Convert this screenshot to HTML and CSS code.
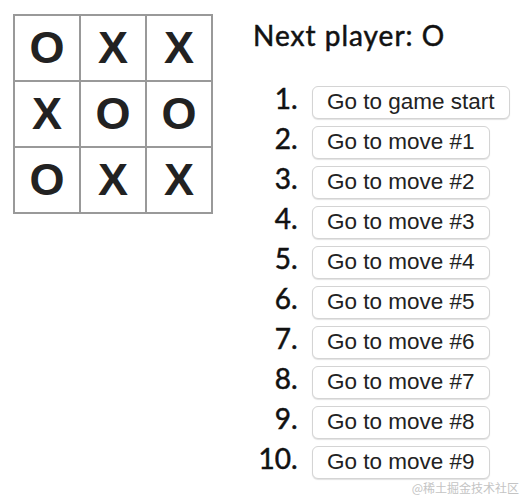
FILE: index.html
```html
<!DOCTYPE html>
<html lang="en">
<head>
    <meta charset="UTF-8">
    <meta name="viewport" content="width=device-width, initial-scale=1.0">
    <title>Tic Tac Toe</title>
    <link rel="stylesheet" href="styles.css">
</head>
<body>
    <main class="game">
        <div class="game-board">
            <div class="board-row">
                <button class="square">O</button>
                <button class="square">X</button>
                <button class="square">X</button>
            </div>
            <div class="board-row">
                <button class="square">X</button>
                <button class="square">O</button>
                <button class="square">O</button>
            </div>
            <div class="board-row">
                <button class="square">O</button>
                <button class="square">X</button>
                <button class="square">X</button>
            </div>
        </div>
        <div class="game-info">
            <div class="status">Next player: O</div>
            <ol class="moves">
                <li><button class="jump">Go to game start</button></li>
                <li><button class="jump">Go to move #1</button></li>
                <li><button class="jump">Go to move #2</button></li>
                <li><button class="jump">Go to move #3</button></li>
                <li><button class="jump">Go to move #4</button></li>
                <li><button class="jump">Go to move #5</button></li>
                <li><button class="jump">Go to move #6</button></li>
                <li><button class="jump">Go to move #7</button></li>
                <li><button class="jump">Go to move #8</button></li>
                <li><button class="jump">Go to move #9</button></li>
            </ol>
        </div>
    </main>
    <div class="watermark">@稀土掘金技术社区</div>
</body>
</html>
```

FILE: styles.css
```css
body{
    margin: 0;
    padding: 0;
    background: white;
    font-family: "Lato", "Noto Sans", sans-serif;
    color: #111;
}
.game{
    display: flex;
    flex-direction: row;
    padding: 14px 13px;
}
.game-board{
    display: flex;
    flex-direction: column;
    border-top: 2px solid #999;
    border-left: 2px solid #999;
    align-self: flex-start;
}
.board-row{
    display: flex;
}
.square{
    width: 66px;
    height: 66px;
    margin: 0;
    padding: 0;
    background: white;
    border: none;
    border-right: 2px solid #999;
    border-bottom: 2px solid #999;
    font-family: "Liberation Sans", Arial, sans-serif;
    font-weight: bold;
    font-size: 45px;
    line-height: 62px;
    color: #222;
    text-align: center;
    box-sizing: border-box;
}
.game-info{
    margin-left: 40px;
}
.status{
    font-size: 28px;
    line-height: 44px;
    margin-top: -1px;
    letter-spacing: 1px;
    -webkit-text-stroke: 0.5px #111;
}
.moves{
    margin: 24px 0 0 0;
    padding-left: 59px;
}
.moves li{
    height: 32px;
    margin-bottom: 8px;
    font-size: 28px;
    -webkit-text-stroke: 0.5px #111;
}
.moves li::marker{
    content: counter(list-item) ".  ";
}
.jump{
    height: 33px;
    padding: 0 14px;
    background: white;
    border: 1px solid #d4d4d4;
    border-radius: 6px;
    box-shadow: 0 1px 1px rgba(0, 0, 0, 0.12);
    font-family: "Liberation Sans", Arial, sans-serif;
    font-size: 22.5px;
    color: #222;
    vertical-align: baseline;
    -webkit-text-stroke: 0;
}
.watermark{
    position: absolute;
    right: 4px;
    bottom: 3px;
    font-family: "Noto Sans CJK SC", sans-serif;
    font-size: 12px;
    color: #c4c4c4;
}
```
